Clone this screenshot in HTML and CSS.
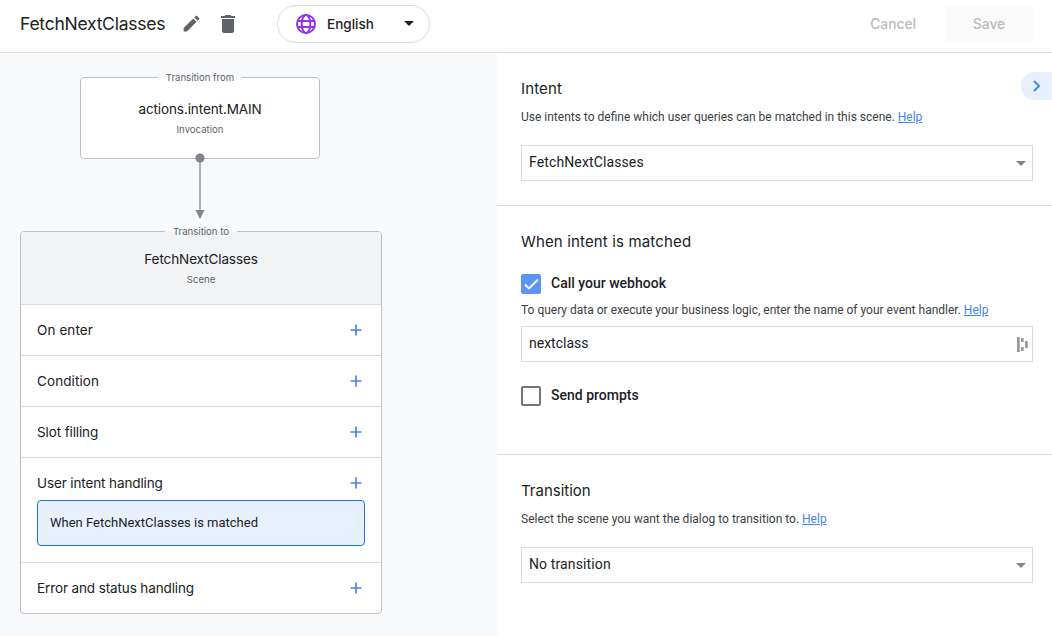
FILE: index.html
```html
<!DOCTYPE html>
<html lang="en">
<head>
<meta charset="utf-8">
<title>FetchNextClasses</title>
<link rel="stylesheet" href="styles.css">
</head>
<body>
<header class="topbar">
  <h1 class="scene-name">FetchNextClasses</h1>
  <svg class="icon edit" viewBox="0 0 24 24" width="21" height="21"><path d="M3 17.25V21h3.75L17.81 9.94l-3.75-3.75L3 17.25zM20.71 7.04a1 1 0 0 0 0-1.41l-2.34-2.34a1 1 0 0 0-1.41 0l-1.83 1.83 3.75 3.75 1.83-1.83z"/></svg>
  <svg class="icon trash" viewBox="0 0 24 24" width="24" height="24"><path d="M6 19c0 1.1.9 2 2 2h8c1.100 0 2-.9 2-2V7H6v12zM19 4h-3.500l-1-1h-5l-1 1H5v2h14V4z"/></svg>
  <div class="language">
    <svg class="globe" viewBox="0 0 20 20" width="20" height="20"><circle cx="10" cy="10" r="9"/><ellipse cx="10" cy="10" rx="4.300" ry="9"/><path d="M1.700 7h16.600M1.700 13h16.600"/></svg>
    <span class="language-name">English</span>
    <svg class="caret" viewBox="0 0 10 5" width="10" height="5"><path d="M0 0h10L5 5z"/></svg>
  </div>
  <div class="actions">
    <span class="cancel">Cancel</span>
    <span class="save">Save</span>
  </div>
</header>
<main class="workspace">
  <section class="canvas">
    <div class="node source">
      <span class="node-label">Transition from</span>
      <span class="node-title">actions.intent.MAIN</span>
      <span class="node-kind">Invocation</span>
    </div>
    <svg class="connector" viewBox="0 0 10 66" width="10" height="66"><path class="line" d="M5 5v53"/><circle cx="5" cy="5" r="4.600"/><path d="M.5 57h9L5 66z"/></svg>
    <div class="node scene">
      <div class="scene-head">
        <span class="node-label">Transition to</span>
        <span class="node-title">FetchNextClasses</span>
        <span class="node-kind">Scene</span>
      </div>
      <div class="row short"><span>On enter</span><svg class="plus" viewBox="0 0 12 12"><path d="M0.500 6h11M6 .5v11"/></svg></div>
      <div class="row short"><span>Condition</span><svg class="plus" viewBox="0 0 12 12"><path d="M0.500 6h11M6 .5v11"/></svg></div>
      <div class="row"><span>Slot filling</span><svg class="plus" viewBox="0 0 12 12"><path d="M0.500 6h11M6 .5v11"/></svg></div>
      <div class="group">
        <div class="row"><span>User intent handling</span><svg class="plus" viewBox="0 0 12 12"><path d="M0.500 6h11M6 .5v11"/></svg></div>
        <div class="handler">When FetchNextClasses is matched</div>
      </div>
      <div class="row"><span>Error and status handling</span><svg class="plus" viewBox="0 0 12 12"><path d="M0.500 6h11M6 .5v11"/></svg></div>
    </div>
  </section>
  <aside class="panel">
    <div class="collapse"><svg viewBox="0 0 8 12" width="8" height="12"><path d="M1 1l5 5-5 5"/></svg></div>
    <section class="block">
      <h2>Intent</h2>
      <p class="hint">Use intents to define which user queries can be matched in this scene. <a>Help</a></p>
      <div class="field select"><span>FetchNextClasses</span><svg class="caret grey" viewBox="0 0 10 5" width="10" height="5"><path d="M0 0h10L5 5z"/></svg></div>
    </section>
    <section class="block matched">
      <h2>When intent is matched</h2>
      <div class="option"><span class="box checked"><svg viewBox="0 0 20 20" width="20" height="20"><path d="M4 10.500l4 4 9-9"/></svg></span><span>Call your webhook</span></div>
      <p class="hint">To query data or execute your business logic, enter the name of your event handler. <a>Help</a></p>
      <div class="field webhook"><span>nextclass</span><svg class="bars" viewBox="0 0 11 15" width="11" height="15"><path d="M0 0h2.700v15H0zM4 1h2.700v4H4zM4 10h2.700v4H4zM8 4h2.700v7H8z"/></svg></div>
      <div class="option prompts"><span class="box"></span><span>Send prompts</span></div>
    </section>
    <section class="block last">
      <h2 class="plain">Transition</h2>
      <p class="hint">Select the scene you want the dialog to transition to. <a>Help</a></p>
      <div class="field select"><span>No transition</span><svg class="caret grey" viewBox="0 0 10 5" width="10" height="5"><path d="M0 0h10L5 5z"/></svg></div>
    </section>
  </aside>
</main>
</body>
</html>
```
FILE: styles.css
```css
* { box-sizing: border-box; }
body {
  margin: 0;
  height: 636px;
  overflow: hidden;
  display: flex;
  flex-direction: column;
  background: #fff;
  color: #202124;
  font-family: Roboto, sans-serif;
  font-size: 14px;
}
h1, h2, p { margin: 0; font-weight: 400; }
svg { display: block; flex: none; }

.topbar {
  height: 53px;
  flex: none;
  display: flex;
  align-items: center;
  padding: 0 19px 5px 20px;
  border-bottom: 1px solid #dadce0;
  font-family: Inter, sans-serif;
}
.scene-name { width: 145px; font-size: 17.5px; letter-spacing: -0.25px; line-height: 24px; white-space: nowrap; }
.icon { fill: #5f6368; }
.edit { margin-left: 16px; }
.trash { margin-left: 13.5px; }
.language {
  width: 153px;
  height: 38px;
  margin-left: 37.5px;
  padding: 0 15px 0 18px;
  display: flex;
  align-items: center;
  border: 1px solid #dadce0;
  border-radius: 19px;
}
.globe { fill: none; stroke: #9334e6; stroke-width: 2; }
.language-name { margin-left: 11px; flex: 1; font-size: 13.5px; font-weight: 500; }
.caret { fill: #202124; }
.caret.grey { fill: #80868b; }
.actions { margin-left: auto; display: flex; align-items: center; gap: 29px; color: #b9bbbd; font-size: 13.8px; font-weight: 500; }
.save {
  width: 88px;
  height: 36px;
  display: flex;
  align-items: center;
  justify-content: center;
  background: #fafafa;
  border-radius: 4px;
}

.workspace { flex: 1; display: flex; min-height: 0; }
.canvas { width: 497px; padding: 24px 20px; background: #f8f9fb; font-family: Inter, sans-serif; }
.node { position: relative; border: 1px solid #bdc1c6; border-radius: 4px; background: #fff; }
.source { width: 240px; height: 82px; margin-left: 60px; }
.source, .scene-head { display: flex; flex-direction: column; align-items: center; }
.source { padding-top: 21px; }
.node-label {
  position: absolute;
  top: -7px;
  left: 50%;
  transform: translateX(-50%);
  padding: 0 8px;
  line-height: 13px;
  font-size: 9.6px;
  white-space: nowrap;
  color: #5f6368;
  background: linear-gradient(#f8f9fb 50%, #fff 50%);
}
.scene-head .node-label { background: linear-gradient(#f8f9fb 50%, #f1f3f4 50%); }
.node-title { font-size: 13.5px; letter-spacing: -0.1px; line-height: 20px; }
.node-kind { margin-top: 4px; font-size: 9.6px; line-height: 13px; color: #5f6368; }
.connector { margin: -6px 0 12px 175px; fill: #80868b; position: relative; z-index: 1; }
.connector .line { stroke: #9aa0a6; stroke-width: 1.6; }
.scene { width: 362px; height: 383px; }
.scene-head { height: 73px; padding-top: 17px; background: #f1f3f4; border-bottom: 1px solid #dadce0; border-radius: 3px 3px 0 0; }
.row { height: 51px; display: flex; align-items: center; justify-content: space-between; padding: 0 19px 0 16px; border-bottom: 1px solid #dadce0; font-size: 13.5px; letter-spacing: -0.12px; }
.row.short { letter-spacing: 0.1px; }
.row:last-child { border-bottom: 0; height: 50px; }
.plus { width: 12px; height: 12px; stroke: #4285f4; stroke-width: 1.7; }
.group { height: 105px; border-bottom: 1px solid #dadce0; }
.group .row { height: 42px; padding-top: 8px; border: 0; }
.handler { height: 46px; margin: 0 16px; padding: 0 12px 2px; display: flex; align-items: center; background: #e8f0fe; border: 1px solid #1a73e8; border-radius: 4px; font-family: Roboto, sans-serif; font-size: 13px; }

.panel { flex: 1; position: relative; }
.collapse { position: absolute; top: 19px; right: 0; width: 31px; height: 28px; padding-left: 12px; display: flex; align-items: center; border-radius: 14px 0 0 14px; background: #e8f0fe; }
.collapse svg { fill: none; stroke: #4285f4; stroke-width: 2; }
.block { padding: 24px 19px 24px 24px; border-bottom: 1px solid #dadce0; }
.matched { padding-bottom: 48px; }
.last { border-bottom: 0; }
.block h2 { font-family: Inter, sans-serif; font-size: 15px; letter-spacing: 0.15px; line-height: 24px; }
.block h2.plain { letter-spacing: 0; }
.hint { margin-top: 8px; font-size: 12px; line-height: 16px; color: #3c4043; white-space: nowrap; }
.hint a { color: #4285f4; text-decoration: underline; }
.field { height: 36px; margin-top: 20px; padding: 0 6px 0 7px; display: flex; align-items: center; justify-content: space-between; border: 1px solid #dadce0; }
.field span { padding-bottom: 2px; }
.select span { letter-spacing: 0.12px; }
.webhook { margin-top: 8px; padding-right: 4px; }
.bars { fill: #999; }
.option { height: 20px; margin-top: 20px; display: flex; align-items: center; gap: 10px; font-weight: 500; }
.option > span:last-child { padding-bottom: 2px; }
.prompts { margin-top: 24px; }
.box { width: 20px; height: 20px; border: 2px solid #757575; border-radius: 2px; }
.box.checked { border: 0; background: #5b96f7; }
.checked svg { fill: none; stroke: #fff; stroke-width: 1.8; }
```
